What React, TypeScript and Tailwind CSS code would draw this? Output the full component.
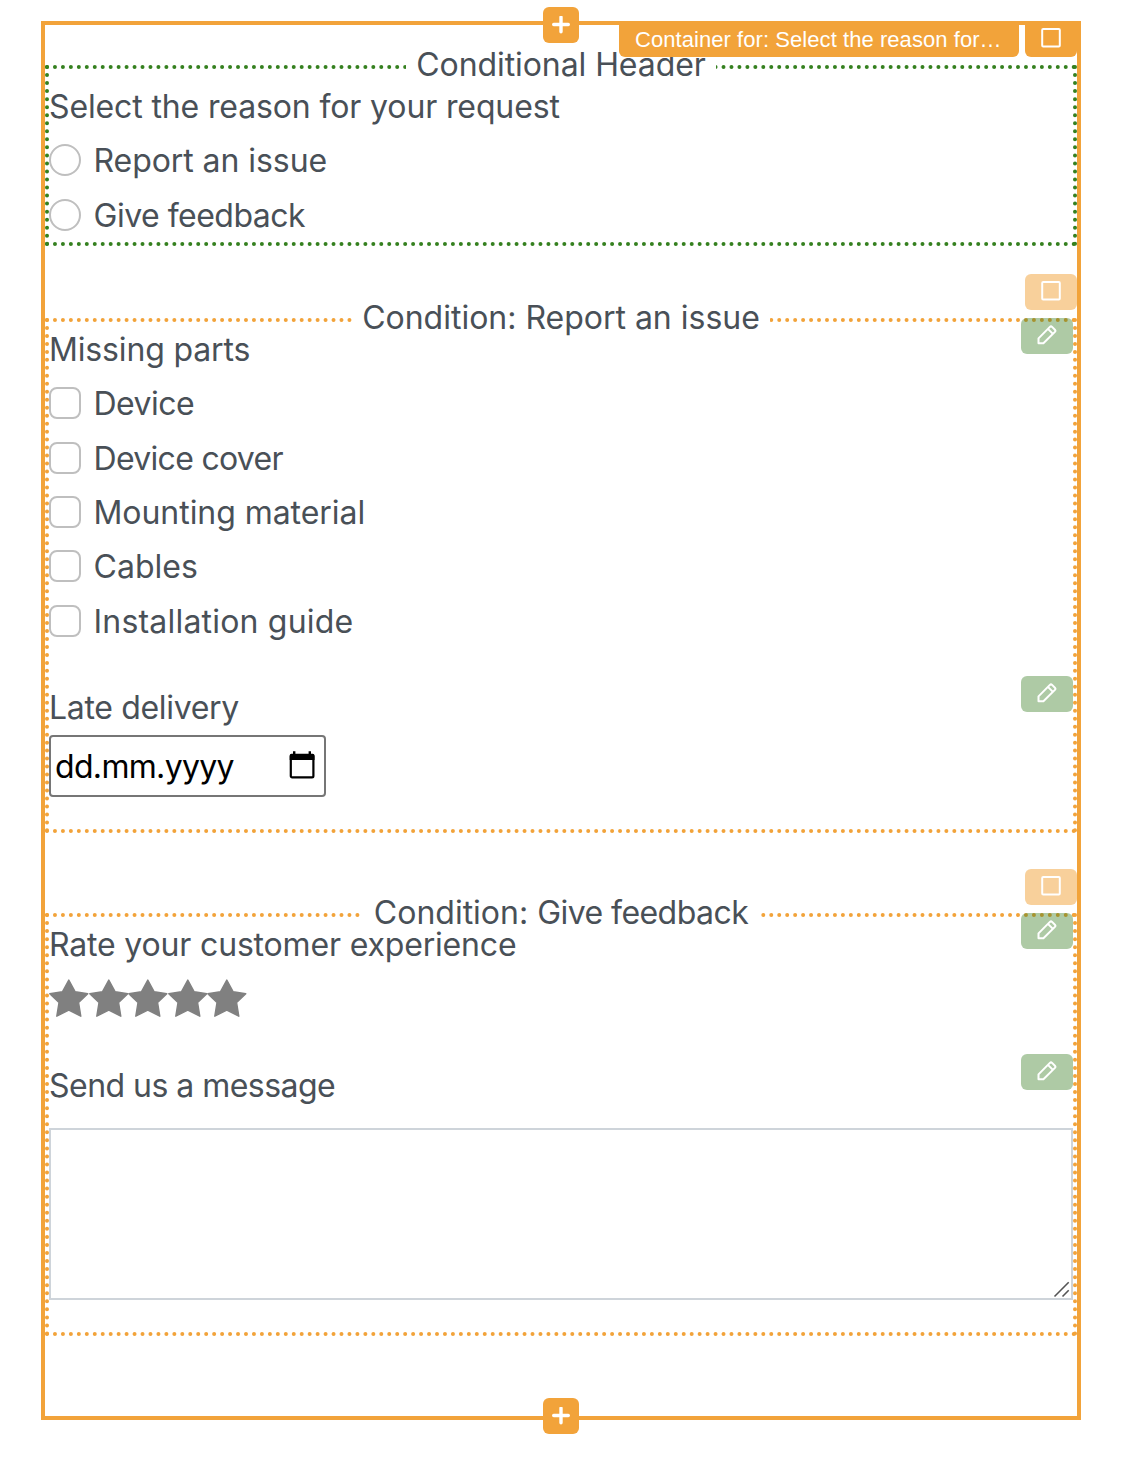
import type { ReactNode } from 'react';

function SquareIcon() {
  return (
    <svg width="20" height="20" viewBox="0 0 20 20" fill="none" stroke="#fff" strokeWidth="2">
      <rect x="1.2" y="1" width="17.6" height="17.6" rx="1" />
    </svg>
  );
}

function PencilIcon() {
  return (
    <svg width="20" height="20" viewBox="0 0 20 20" fill="none" stroke="#fff" strokeWidth="2" strokeLinejoin="round">
      <path d="M1.5 18.300v-4.900L12.900 1.900a1.600 1.600 0 0 1 2.200 0l2.800 2.800a1.600 1.600 0 0 1 0 2.200L6.400 18.300z" />
      <path d="M10.900 3.900l5 5" />
    </svg>
  );
}

function PlusButton({ className }: { className: string }) {
  return (
    <button className={`absolute left-[498px] flex size-9 items-center justify-center rounded-[6px] bg-[#f2a33a] ${className}`}>
      <svg width="18" height="18" viewBox="0 0 18 18" stroke="#fff" strokeWidth="3.4" strokeLinecap="round">
        <path d="M9 1.200v14.600M1.700 8.500h14.600" />
      </svg>
    </button>
  );
}

function GroupTag() {
  return (
    <div className="absolute -top-[46px] right-[-4px] -mt-[22px] flex h-9 w-[52px] justify-center rounded-[6px] bg-[#f2a33a] pt-[7px] opacity-50">
      <SquareIcon />
    </div>
  );
}

function EditTag({ className }: { className: string }) {
  return (
    <div className={`absolute right-0 h-9 w-[52px] rounded-[6px] ${className}`}>
      <div className="absolute inset-0 rounded-[6px] bg-[#357a1f] opacity-40" />
      <div className="relative flex justify-center pt-[7px]">
        <PencilIcon />
      </div>
    </div>
  );
}

function Option({ label, className, round }: { label: string; className: string; round?: boolean }) {
  return (
    <label className="flex h-[54.4px] items-center gap-[12.5px]">
      <span className={`size-8 shrink-0 border-2 border-[#bfbfbf] bg-white ${round ? 'rounded-full' : 'rounded-[8px]'}`} />
      <span className={`pt-[2px] ${className}`}>{label}</span>
    </label>
  );
}

function Legend({ children, className }: { children: ReactNode; className: string }) {
  return (
    <legend className={`mx-auto h-11 pb-[5px] text-center leading-[39px] whitespace-nowrap ${className}`}>{children}</legend>
  );
}

const issueParts = [
  { label: 'Device', className: 'tracking-[-0.53px]' },
  { label: 'Device cover', className: 'tracking-[-0.7px]' },
  { label: 'Mounting material', className: 'tracking-[-0.05px]' },
  { label: 'Cables', className: 'tracking-[0.03px]' },
  { label: 'Installation guide', className: 'tracking-[0.2px]' },
];

export default function App() {
  return (
    <div className="h-[1464px] w-[1126px] bg-white pt-[21px] pl-[41px] font-['Inter',sans-serif] text-[32px] text-[#495057]">
      <main className="relative h-[1399px] w-[1040px] border-4 border-[#f2a33a] pt-5">
        <fieldset className="h-[201px] border-4 border-dotted border-[#35801f]">
          <Legend className="w-[310px] tracking-[-0.08px]">Conditional Header</Legend>
          <h2 className="leading-[35px] tracking-[-0.13px]">Select the reason for your request</h2>
          <div className="mt-[9px]">
            <Option round label="Report an issue" className="tracking-[-0.065px]" />
            <Option round label="Give feedback" className="tracking-[-0.5px]" />
          </div>
        </fieldset>

        <fieldset className="relative mt-[52px] h-[535px] border-4 border-dotted border-[#f2a33a]">
          <Legend className="w-[418px] tracking-[-0.01px]">Condition: Report an issue</Legend>
          <h2 className="-mt-[10px] leading-[35px] tracking-[-0.15px]">Missing parts</h2>
          <div className="mt-[9px]">
            {issueParts.map((part) => (
              <Option key={part.label} {...part} />
            ))}
          </div>
          <h2 className="mt-[42px] leading-[35px] tracking-[-0.33px]">Late delivery</h2>
          <div className="mt-[10px] flex h-[62px] w-[277px] items-center justify-between rounded-[4px] border-2 border-[#767676] bg-white pr-[9px] pl-1 text-black">
            <span className="pt-[3px] tracking-[-0.67px]">dd.mm.yyyy</span>
            <svg width="26" height="28" viewBox="0 0 26 28" className="-mt-[2px]">
              <rect x="1.8" y="4" width="22.6" height="22.4" rx="1.4" fill="none" stroke="#000" strokeWidth="2.200" />
              <path d="M.7 9V4.500Q.7 2.700 2.500 2.700h21.200Q25.500 2.700 25.500 4.500V9zM4 .3h2.400v4H4zM19.600 .3H22v4h-2.400z" fill="#000" />
            </svg>
          </div>
          <GroupTag />
          <EditTag className="-top-[24px]" />
          <EditTag className="top-[334px]" />
        </fieldset>

        <fieldset className="relative mt-[60px] h-[443px] border-4 border-dotted border-[#f2a33a]">
          <Legend className="w-[400px]">
            Condition: <span className="tracking-[-0.55px]">Give feedback</span>
          </Legend>
          <h2 className="-mt-[10px] leading-[35px] tracking-[-0.17px]">Rate your customer experience</h2>
          <div className="mt-4 flex h-10">
            {[0, 1, 2, 3, 4].map((star) => (
              <svg key={star} width="39.6" height="40" viewBox="0 0 39.6 40" className="shrink-0">
                <path
                  d="M19.800 2L26.200 13.800L38.800 15.700L29.600 24.500L31.800 38.200L19.800 32.100L7.800 38.200L10 24.500L.8 15.700L13.400 13.800Z"
                  fill="#808080"
                  stroke="#808080"
                  strokeWidth="1.4"
                  strokeLinejoin="round"
                />
              </svg>
            ))}
          </div>
          <h2 className="mt-[50px] leading-[35px] tracking-[-0.53px]">Send us a message</h2>
          <div className="mt-[25px] flex h-[172px] items-end justify-end border-2 border-[#ced4da] bg-white">
            <svg width="18" height="18" viewBox="0 0 18 18" stroke="#555" strokeWidth="1.6">
              <path d="M1.500 16.500L15.700 2.300M9.500 16.500L15.700 10.300" />
            </svg>
          </div>
          <GroupTag />
          <EditTag className="-top-[24px]" />
          <EditTag className="top-[117px]" />
        </fieldset>

        <PlusButton className="-top-[18px]" />
        <PlusButton className="-bottom-[18px]" />

        <div className="absolute top-0 right-0 flex h-8 gap-[6px] text-white">
          <div className="w-[400px] rounded-b-[6px] bg-[#f2a33a] pl-4 font-['Liberation_Sans',sans-serif] text-[22px] leading-[30px] tracking-[0.06px] whitespace-nowrap">
            Container for: Select the reason for…
          </div>
          <div className="flex w-[52px] justify-center rounded-b-[6px] bg-[#f2a33a] pt-[3px]">
            <SquareIcon />
          </div>
        </div>
      </main>
    </div>
  );
}
